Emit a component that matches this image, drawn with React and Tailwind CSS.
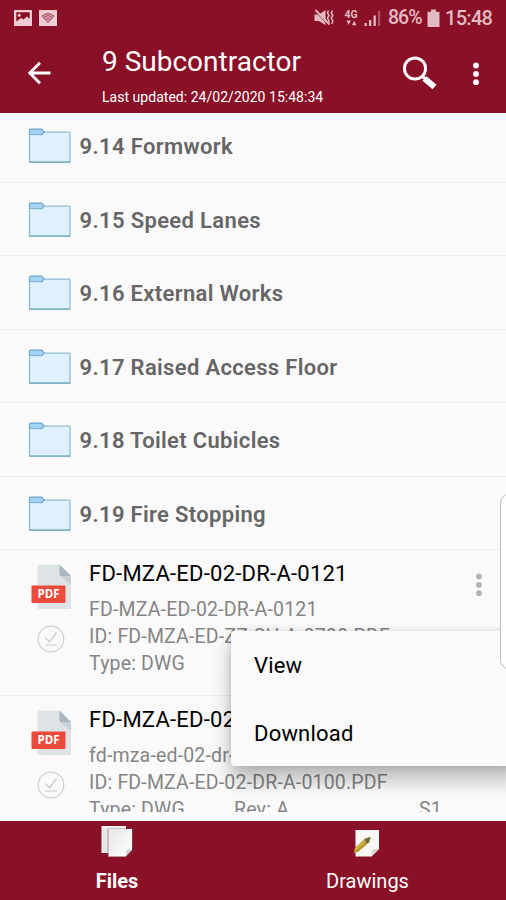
import React from 'react';
import clsx from 'clsx';

const folders = [
  { name: '9.14 Formwork', spacing: 'tracking-[0.35px]' },
  { name: '9.15 Speed Lanes', spacing: 'tracking-[0.35px]' },
  { name: '9.16 External Works', spacing: 'tracking-[0.33px]' },
  { name: '9.17 Raised Access Floor', spacing: 'tracking-[0.33px]' },
  { name: '9.18 Toilet Cubicles', spacing: 'tracking-[0.33px]' },
  { name: '9.19 Fire Stopping', spacing: 'tracking-[0.33px]' },
];

const files = [
  { title: 'FD-MZA-ED-02-DR-A-0121', name: 'FD-MZA-ED-02-DR-A-0121', id: 'FD-MZA-ED-ZZ-SH-A-0700.PDF', type: 'DWG' },
  { title: 'FD-MZA-ED-02-DR-A-0100', name: 'fd-mza-ed-02-dr-a-0100', id: 'FD-MZA-ED-02-DR-A-0100.PDF', type: 'DWG', rev: 'A', status: 'S1' },
];

const FolderIcon = () => (
  <svg width="44" height="36" viewBox="0 0 44 36" fill="none">
    <path d="M1.5 34.2V2.5Q1.5 1.2 3 1.2H13.5L16.5 4.2H41Q42 4.2 42 5.2V34.2Z" fill="#dff1ff" stroke="#93bccf" strokeWidth="1.3" />
    <path d="M1.5 6.5V2.5Q1.5 1.2 3 1.2H13.5L16 4L14 6.7Z" fill="#a4d3f5" stroke="#6ea8ca" strokeWidth="1.1" />
    <path d="M1.5 34.2H42" stroke="#78a9bf" strokeWidth="1.3" />
  </svg>
);

const PdfIcon = () => (
  <svg width="42" height="47" viewBox="0 0 42 47">
    <path d="M8 0.5H28.5L40 12V43.5Q40 45 38.5 45H8Q6.5 45 6.5 43.5V2Q6.5 0.5 8 0.5Z" fill="#dee3e6" />
    <path d="M28.5 11.5L40 21V12Z" fill="#c9d1d6" />
    <path d="M28.5 0.5L40 12H30Q28.5 12 28.5 10.5Z" fill="#aab5bd" />
    <rect x="0.5" y="21.5" width="34" height="17.5" rx="0.8" fill="#ea4b3b" />
    <text x="17.5" y="34.3" textAnchor="middle" textLength="22" fontFamily="Open Sans, sans-serif" fontSize="11.5" fontWeight="700" fill="#fff">PDF</text>
  </svg>
);

const CheckIcon = () => (
  <svg width="28" height="28" viewBox="0 0 28 28" fill="none" stroke="#d0d0d0" strokeWidth="1.2">
    <circle cx="14" cy="14" r="12.8" />
    <path d="M8.3 12.5L12.5 16.8L19.5 7.5" strokeWidth="1.5" />
    <path d="M8 20H20" />
  </svg>
);

const Dots = ({ className }) => (
  <svg width="10" height="26" viewBox="0 0 10 26" fill="currentColor" className={className}>
    <circle cx="5" cy="4.5" r="2.9" />
    <circle cx="5" cy="12.9" r="2.9" />
    <circle cx="5" cy="21.2" r="2.9" />
  </svg>
);

const StatusBar = () => (
  <div className="flex h-[36px] items-center pl-[14px] pr-[14px] text-[#e3b9c2]">
    <svg width="18" height="16" viewBox="0 0 18 16" className="shrink-0">
      <rect width="18" height="16" rx="0.5" fill="#f0ccd4" />
      <path d="M2.3 2.3H15.7V9L13 6.5L9.5 9.5L7 8L2.3 11.5Z" fill="#8a1028" />
      <circle cx="5.3" cy="5.2" r="1.5" fill="#f0ccd4" />
    </svg>
    <svg width="18" height="16" viewBox="0 0 18 16" className="ml-[7px] shrink-0" fill="none">
      <rect width="18" height="16" rx="0.5" fill="#f0ccd4" />
      <path d="M3 6Q9 1 15 6L9 12.5Z" fill="#d7a0ad" stroke="#a74b60" strokeWidth="1" />
      <path d="M5 7.3Q9 4 13 7.3M7 9.2Q9 7.6 11 9.2" stroke="#a74b60" strokeWidth="1" />
    </svg>
    <svg width="20" height="18" viewBox="0 0 20 18" className="ml-auto shrink-0" fill="currentColor">
      <path d="M0.5 5.5H5L11.5 1V16L5 12H0.5Z" />
      <path d="M1 2L14.5 16.5" stroke="#8a1028" strokeWidth="0.9" />
      <path d="M1.5 1L15.5 15.5" stroke="currentColor" strokeWidth="1.8" />
      <path d="M14.5 1.5L13.5 4L15 6.5L13.5 9L15 12L14 15M18.5 1.5L17.3 4L18.8 6.5L17.3 9L18.8 12L17.8 15" fill="none" stroke="currentColor" strokeWidth="1.5" />
    </svg>
    <div className="ml-[9px] flex w-[16px] flex-col items-center">
      <span className="text-[10.5px] leading-[9px] font-bold">4G</span>
      <svg width="11" height="6" viewBox="0 0 11 6" fill="currentColor" className="mt-px">
        <path d="M0.5 0.5H4.8L2.6 5Z" />
        <path d="M6 5.2H10.4L8.2 0.7Z" />
      </svg>
    </div>
    <svg width="17" height="17" viewBox="0 0 17 17" className="ml-[5px] shrink-0" fill="currentColor">
      <rect x="0.5" y="13" width="2.3" height="3" />
      <rect x="5" y="10" width="2.3" height="6" />
      <rect x="9.5" y="5.5" width="2.3" height="10.5" />
      <rect x="14" y="1" width="2.2" height="15" opacity="0.4" />
    </svg>
    <span className="ml-[7px] w-[34px] text-[19.5px] leading-[24px] font-medium tracking-[-1px] whitespace-nowrap">86%</span>
    <svg width="13" height="19" viewBox="0 0 13 19" className="ml-[5px] shrink-0" fill="currentColor">
      <path d="M4 0.5H9V2.7H12.5V18H0.5V2.7H4Z" />
    </svg>
    <span className="ml-[5px] w-[47px] text-[20px] leading-[24px] font-medium tracking-[-0.7px] whitespace-nowrap">15:48</span>
  </div>
);

const Header = () => (
  <header className="h-[112.5px] shrink-0 bg-[#8a1028] text-white">
    <StatusBar />
    <div className="flex h-[76px]">
      <svg width="24" height="24" viewBox="0 0 24 24" className="mt-[25px] ml-[28px] shrink-0" fill="none" stroke="currentColor" strokeWidth="2.8">
        <path d="M22.5 12H2M12 1.8L1.8 12L12 22.2" />
      </svg>
      <div className="ml-[50px]">
        <h1 className="mt-[10px] text-[28px] leading-[32px] whitespace-nowrap">9 Subcontractor</h1>
        <p className="mt-[11px] text-[14px] leading-[16px] tracking-[0.03px] whitespace-nowrap">Last updated: 24/02/2020 15:48:34</p>
      </div>
      <svg width="36" height="36" viewBox="0 0 36 36" className="mt-[19px] mr-[33px] ml-auto shrink-0" fill="none">
        <circle cx="13" cy="13.5" r="10.6" stroke="#fff" strokeWidth="3" />
        <path d="M20 21L24 24.5" stroke="#fff" strokeWidth="3" />
        <path d="M22.5 23.5L32.5 32" stroke="#fff" strokeWidth="6.2" />
      </svg>
      <Dots className="mt-[25px] mr-[25px] shrink-0" />
    </div>
  </header>
);

const FolderRow = ({ folder, first }) => (
  <div className={clsx('flex shrink-0 items-end border-b border-[#ececec] pb-[17.5px] pl-[28px]', first ? 'h-[70px]' : 'h-[73.5px]')}>
    <FolderIcon />
    <span className={clsx('ml-[7.5px] mb-[3px] text-[22px] leading-[28px] font-semibold whitespace-nowrap text-[#666]', folder.spacing)}>{folder.name}</span>
  </div>
);

const FileRow = ({ file }) => (
  <div className="flex h-[146px] shrink-0 border-b border-[#ececec] pl-[31px]">
    <div className="flex w-[58px] shrink-0 flex-col pt-[14px]">
      <PdfIcon />
      <div className="mt-[14px] ml-[6px]">
        <CheckIcon />
      </div>
    </div>
    <div className="flex-1 pt-[10px] whitespace-nowrap">
      <p className="text-[22px] leading-[28px] tracking-[0.24px] text-black">{file.title}</p>
      <div className="mt-[8px] text-[19.5px] leading-[27px] tracking-[0.18px] text-[#858585]">
        <p>{file.name}</p>
        <p>ID: {file.id}</p>
        <div className="flex">
          <span className="w-[145px]">Type: {file.type}</span>
          <span className="w-[185px]">{file.rev && `Rev: ${file.rev}`}</span>
          <span>{file.status}</span>
        </div>
      </div>
    </div>
    <Dots className="mt-[22px] mr-[22px] shrink-0 text-[#b3b3b3]" />
  </div>
);

const FilesIcon = () => (
  <svg width="34" height="34" viewBox="0 0 34 34">
    <defs>
      <linearGradient id="sheet" x1="0" y1="0" x2="1" y2="1">
        <stop offset="0" stopColor="#e5e7e6" />
        <stop offset="1" stopColor="#fff" />
      </linearGradient>
    </defs>
    <path d="M1.5 1H26V28H1.5Z" fill="#fbf6f6" />
    <path d="M3 2.5H25V27H3Z" fill="#e9e6e6" />
    <path d="M7.5 3.5H33V25.5L26.5 32H7.5Z" fill="#7d5a60" opacity="0.55" />
    <path d="M8.5 4H32V24.5L25.5 31.5H8.5Z" fill="url(#sheet)" />
    <path d="M32 24.5H26.5L25.5 31.5Z" fill="#d5d5d5" />
  </svg>
);

const DrawingsIcon = () => (
  <svg width="30" height="30" viewBox="0 0 30 30">
    <path d="M3.5 1H27V20L19.5 27.5H3.5Z" fill="#f9f8f7" />
    <path d="M27 20H20.5L19.5 27.5Z" fill="#d9d5d5" />
    <path d="M1.5 24.5L3 19L13 9.5L18.5 8L17 13.5L6.5 22.5Z" fill="#b3952b" />
    <path d="M3 21L14 11" stroke="#d8c04c" strokeWidth="1.5" fill="none" />
    <path d="M12.5 10L18.5 8L17 13.5L14.5 14Z" fill="#6d6545" />
  </svg>
);

const App = () => {
  return (
    <div className="relative flex h-[900px] w-[506px] flex-col overflow-hidden bg-[#fafafa] font-['Roboto',sans-serif]">
      <Header />

      {/* File list */}
      <main className="flex h-[699px] shrink-0 flex-col overflow-hidden">
        {folders.map((folder, i) => (
          <FolderRow key={folder.name} folder={folder} first={i === 0} />
        ))}
        {files.map((file) => (
          <FileRow key={file.title} file={file} />
        ))}
      </main>

      {/* Context menu */}
      <div className="absolute top-[631px] left-[231px] h-[135px] w-[290px] rounded-[3px] bg-[#fafafa] pl-[23px] text-[22px] leading-[28px] tracking-[0.2px] text-black shadow-[0_14px_20px_rgba(0,0,0,0.26),0_0_8px_rgba(0,0,0,0.12)]">
        <p className="pt-[21px]">View</p>
        <p className="pt-[40px]">Download</p>
      </div>

      {/* Edge panel handle */}
      <div className="absolute top-[494px] left-[500px] h-[175px] w-[20px] rounded-[9px] border border-[#bdbdbd] bg-white" />

      {/* Bottom tabs */}
      <nav className="relative mt-auto flex h-[79.5px] shrink-0 bg-[#8a1028] text-white">
        <div className="flex w-[234px] flex-col items-center pt-[4px]">
          <FilesIcon />
          <span className="mt-[10px] text-[20px] leading-[24px] font-bold">Files</span>
        </div>
        <div className="flex w-[266px] flex-col items-center pt-[8px]">
          <DrawingsIcon />
          <span className="mt-[10px] ml-px text-[20px] leading-[24px]">Drawings</span>
        </div>
      </nav>
    </div>
  );
};

export default App;
